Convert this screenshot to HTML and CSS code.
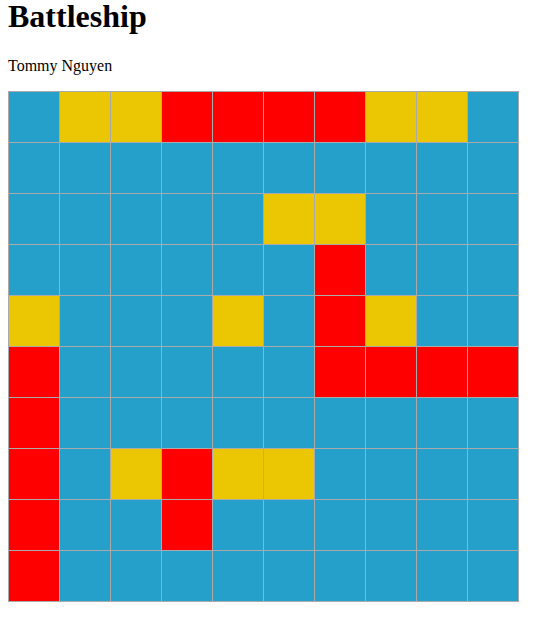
FILE: index.html
```html
<!DOCTYPE html>
<html lang="en">
<head>
<meta charset="utf-8">
<meta name="viewport" content="width=device-width, initial-scale=1">
<title>Battleship</title>
<link rel="stylesheet" href="styles.css">
</head>
<body>
<h1 class="title">Battleship</h1>
<p class="author">Tommy Nguyen</p>
<div class="board" id="board"></div>
<script src="board.js"></script>
</body>
</html>
```
FILE: styles.css
```css
body {
  margin: 0 8px 8px;
  background: #fff;
  color: #000;
  font-family: "Liberation Serif", "Times New Roman", serif;
  font-size: 16px;
  line-height: 18px;
}

.title {
  margin: 0 0 25px;
  font-size: 32px;
  line-height: 32px;
}

.author {
  margin: 0 0 16px;
}

.board {
  box-sizing: border-box;
  display: grid;
  grid-template-columns: repeat(10, 1fr);
  gap: 1px;
  max-width: 511px;
  padding: 1px;
  background: #aaa;
}

.cell {
  aspect-ratio: 1;
  background: #24a0cb;
}

.hit {
  background: #f00;
}

.miss {
  background: #eac702;
}
```
FILE: board.js
```js
// "." untouched water, "h" hit, "m" miss
const rows = [
  ".mmhhhhmm.",
  "..........",
  ".....mm...",
  "......h...",
  "m...m.hm..",
  "h.....hhhh",
  "h.........",
  "h.mhmm....",
  "h..h......",
  "h........."
];
const states = { h: "hit", m: "miss" };
const board = document.getElementById("board");

for (const row of rows) {
  for (const mark of row) {
    const cell = document.createElement("div");
    cell.className = "cell";
    if (states[mark]) cell.classList.add(states[mark]);
    board.append(cell);
  }
}
```
